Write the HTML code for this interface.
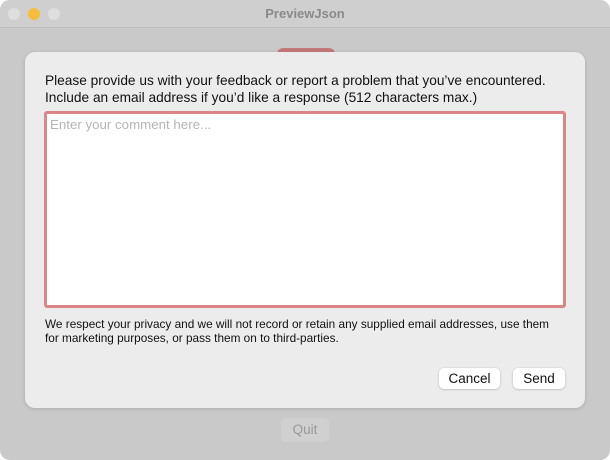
<!DOCTYPE html>
<html><head><style>
*{margin:0;padding:0;box-sizing:border-box}
body{width:610px;height:460px;background:#fff;font-family:"Liberation Sans",sans-serif;overflow:hidden}
.win{position:absolute;left:0;top:0;width:610px;height:460px;background:#c9c9c9;border-radius:10px;overflow:hidden}
.tb{position:absolute;left:0;top:0;width:610px;height:28px;background:#cfcfcf;border-bottom:1px solid #bdbdbd}
.dot{position:absolute;top:8px;width:12px;height:12px;border-radius:50%;background:#dedede}
.title{position:absolute;top:6px;width:610px;text-align:center;font-size:13px;font-weight:bold;color:#8a8a8a}
.red{position:absolute;left:277px;top:48px;width:58px;height:12px;border-radius:6px;background:#c4797a}
.sheet{position:absolute;left:25px;top:52px;width:560px;height:356px;background:#ececec;border-radius:10px;box-shadow:0 1px 4px rgba(0,0,0,.15)}
.p{position:absolute;left:20px;top:20px;font-size:13.7px;line-height:17px;color:#111;white-space:nowrap}
.ta{position:absolute;left:19px;top:59px;width:522px;height:197px;background:#fff;border:3px solid #dc8588;border-radius:3px}
.ph{position:absolute;left:3px;top:3px;font-size:13.3px;color:#b5b5b5}
.n{position:absolute;left:20px;top:265px;font-size:11.8px;line-height:14px;color:#111;white-space:nowrap}
.btn{position:absolute;top:316px;height:21px;background:#fff;border-radius:5px;box-shadow:0 0.5px 2px rgba(0,0,0,.25);font-size:13.5px;line-height:21px;text-align:center;color:#111}
.quit{position:absolute;left:281px;top:418px;width:48px;height:24px;background:#d0d0d0;border-radius:5px;font-size:13.5px;line-height:24px;text-align:center;color:#999}
</style></head><body>
<div class="win">
<div class="tb"><div class="dot" style="left:8px"></div><div class="dot" style="left:28px;background:#f6bd3b"></div><div class="dot" style="left:48px"></div><div class="title">PreviewJson</div></div>
<div class="red"></div>
<div class="quit">Quit</div>
<div class="sheet">
<div class="p">Please provide us with your feedback or report a problem that you’ve encountered.<br>Include an email address if you’d like a response (512 characters max.)</div>
<div class="ta"><div class="ph">Enter your comment here...</div></div>
<div class="n">We respect your privacy and we will not record or retain any supplied email addresses, use them<br>for marketing purposes, or pass them on to third-parties.</div>
<div class="btn" style="left:414px;width:61px">Cancel</div>
<div class="btn" style="left:488px;width:52px">Send</div>
</div>
</div>
</body></html>
